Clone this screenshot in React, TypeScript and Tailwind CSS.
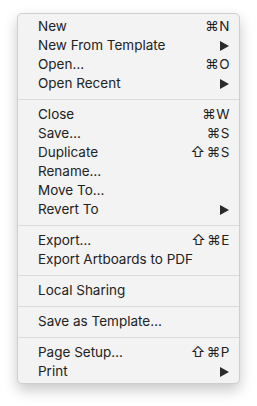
type Item = { label: string; shortcut?: string; shift?: boolean; submenu?: boolean };

const groups: Item[][] = [
  [
    { label: 'New', shortcut: '⌘N' },
    { label: 'New From Template', submenu: true },
    { label: 'Open…', shortcut: '⌘O' },
    { label: 'Open Recent', submenu: true },
  ],
  [
    { label: 'Close', shortcut: '⌘W' },
    { label: 'Save…', shortcut: '⌘S' },
    { label: 'Duplicate', shortcut: '⌘S', shift: true },
    { label: 'Rename…' },
    { label: 'Move To…' },
    { label: 'Revert To', submenu: true },
  ],
  [
    { label: 'Export…', shortcut: '⌘E', shift: true },
    { label: 'Export Artboards to PDF' },
  ],
  [{ label: 'Local Sharing' }],
  [{ label: 'Save as Template…' }],
  [
    { label: 'Page Setup…', shortcut: '⌘P', shift: true },
    { label: 'Print', submenu: true },
  ],
];

function Row({ item }: { item: Item }) {
  return (
    <div className="flex h-[19px] items-center justify-between pl-[20px] pr-[9px] text-[#222222]">
      <span>{item.label}</span>
      {item.shortcut && (
        <span className="flex tracking-[0.5px]">
          {item.shift && <span className="mr-[1px] text-[14.5px] leading-[19px]">⇧</span>}
          {item.shortcut}
        </span>
      )}
      {item.submenu && (
        <svg width="9" height="10" viewBox="0 0 9 10" className="mr-[1px]">
          <path d="M0 0 L9 5 L0 10 Z" fill="#2b2b2b" />
        </svg>
      )}
    </div>
  );
}

export default function App() {
  return (
    <div className="h-[406px] w-[257px] bg-white pl-[17px] pt-[13px]">
      <div
        className="w-[223px] rounded-[5px] border border-[#cfcfcf] bg-[#f3f3f3] pb-[2px] pt-[3px] text-[13.5px] shadow-[0_6px_14px_rgba(0,0,0,0.22)]"
        style={{ fontFamily: 'Inter, "Liberation Sans", sans-serif' }}
      >
        {groups.map((group, gi) => (
          <div key={gi}>
            {gi > 0 && (
              <div className="pb-[5px] pt-[6px]">
                <div className="h-px bg-[#dadada]" />
              </div>
            )}
            {group.map((item) => (
              <Row key={item.label} item={item} />
            ))}
          </div>
        ))}
      </div>
    </div>
  );
}
